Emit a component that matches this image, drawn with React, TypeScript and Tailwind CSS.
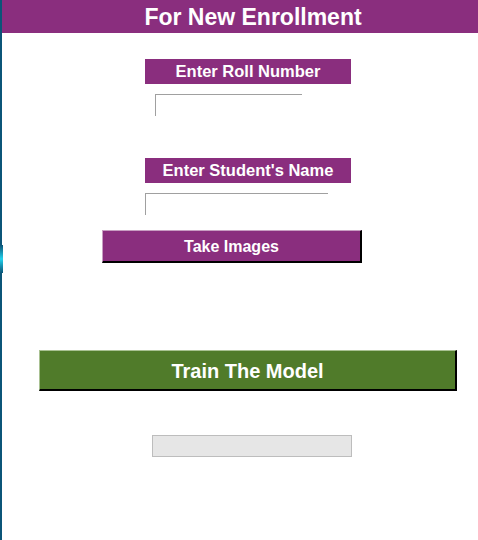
export default function App() {
  return (
    <div className="flex w-[478px] h-[540px] bg-white font-['Liberation_Sans',Arial,sans-serif] overflow-hidden">
      <div className="w-[2px] h-full flex flex-col bg-[#0b5578]">
        <div className="h-[245px]" />
        <div className="h-[28px] w-[3px] bg-gradient-to-b from-[#0b5578] via-[#22d3ee] to-[#0b5578]" />
      </div>
      <div className="flex-1 flex flex-col">
        <div className="h-[33px] bg-[#8a2e7e] flex items-center justify-center pl-[26px] pt-[1px]">
          <span className="text-[23px] font-bold text-white leading-none">For New Enrollment</span>
        </div>

        <div className="mt-[26px] ml-[143px] w-[206px] h-[25px] bg-[#8a2e7e] flex items-center justify-center">
          <span className="text-[16.5px] font-bold text-white leading-none">Enter Roll Number</span>
        </div>
        <input className="mt-[10px] ml-[153px] w-[147px] h-[22px] border-t border-l border-[#a0a0a0] outline-none" />

        <div className="mt-[42px] ml-[143px] w-[206px] h-[25px] bg-[#8a2e7e] flex items-center justify-center">
          <span className="text-[16.5px] font-bold text-white leading-none">Enter Student's Name</span>
        </div>
        <input className="mt-[10px] ml-[143px] w-[183px] h-[22px] border-t border-l border-[#a0a0a0] outline-none" />

        <button className="mt-[15px] ml-[100px] w-[260px] h-[33px] bg-[#8a2e7e] border-t border-l border-[#c89ec2] border-r-2 border-b-2 border-r-black border-b-black flex items-center justify-center pt-[2px]">
          <span className="text-[16px] font-bold text-white leading-none">Take Images</span>
        </button>

        <button className="mt-[87px] ml-[37px] w-[418px] h-[41px] bg-[#507b2a] border-t border-l border-[#a9c192] border-r-2 border-b-2 border-r-black border-b-black flex items-center justify-center pt-[2px]">
          <span className="text-[20px] font-bold text-white leading-none">Train The Model</span>
        </button>

        <div className="mt-[44px] ml-[150px] w-[200px] h-[22px] bg-[#e6e6e6] border border-[#bdbdbd]" />
      </div>
    </div>
  );
}
